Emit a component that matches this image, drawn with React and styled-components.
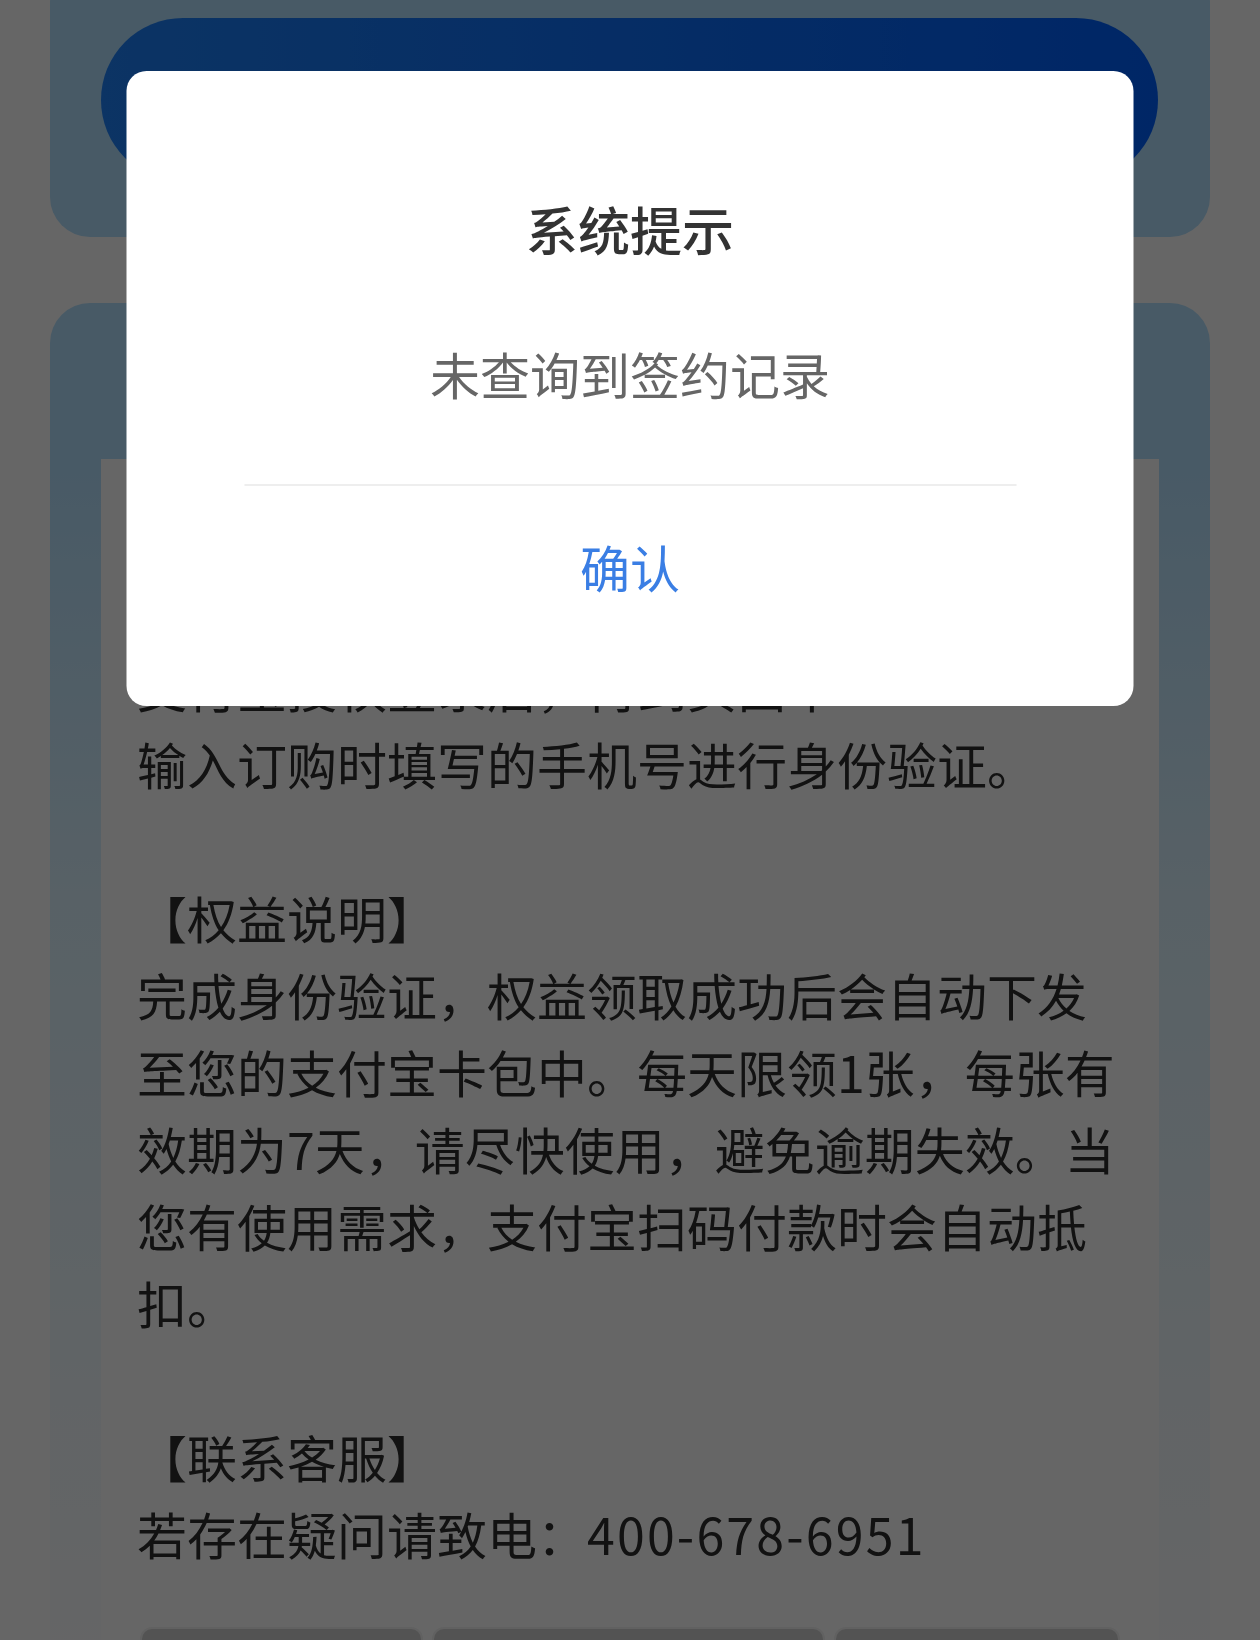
import React from "react";
import styled, { createGlobalStyle } from "styled-components";

const GlobalStyle = createGlobalStyle`
  html, body {
    margin: 0;
    padding: 0;
    background: #fff;
  }
  body {
    font-family: "Noto Sans CJK SC", "Noto Sans", sans-serif;
  }
`;

const Page = styled.div`
  position: relative;
  width: 1260px;
  height: 1640px;
  overflow: hidden;
  background: #fff;
`;

// page is scrolled a little, so the top card starts above the window
const TopCard = styled.div`
  margin: -37px 50px 0;
  padding: 55px 52px 55px 51px;
  background: #b4e1ff;
  border-radius: 40px;
`;

const ClaimButton = styled.div`
  width: 100%;
  height: 164px;
  border-radius: 82px;
  background: linear-gradient(90deg, #1e82fa 0%, #0060ff 100%);
`;

const RulesCard = styled.div`
  margin: 66px 50px 0;
  padding: 0 51px;
  border-radius: 40px;
  background: linear-gradient(
    180deg,
    #b4e1ff 0px,
    #b4e1ff 160px,
    #dcf3ff 600px,
    #f3fbff 1100px,
    #fcfdff 1340px
  );
`;

const RulesHeader = styled.div`
  height: 156px;
`;

const RulesBody = styled.div`
  background: #fff;
  padding: 35px 36px 0;
  color: #2e2e2e;
  font-size: 50px;
  line-height: 77px;
`;

const Section = styled.div`
  & + & {
    margin-top: 77px;
  }
`;

const Line = styled.p`
  margin: 0;
`;

const Phone = styled.span`
  letter-spacing: 2.2px;
`;

const Tabs = styled.div`
  display: grid;
  grid-template-columns: 283fr 393fr 286fr;
  gap: 9px;
  margin-top: 55px;
  padding: 0 3px;
`;

const Tab = styled.div`
  height: 80px;
  border: 2px solid #f2f2f2;
  border-radius: 12px;
  background: #d0d0d0;
`;

const Mask = styled.div`
  position: fixed;
  inset: 0;
  background: rgba(0, 0, 0, 0.6);
`;

const Dialog = styled.div`
  position: fixed;
  top: 71px;
  left: 50%;
  transform: translateX(-50%);
  width: 1007px;
  height: 635px;
  background: #fff;
  border-radius: 20px;
  display: flex;
  flex-direction: column;
  align-items: center;
`;

const DialogTitle = styled.div`
  margin-top: 122px;
  font-size: 52px;
  line-height: 72px;
  font-weight: 500;
  color: #333;
`;

const DialogText = styled.div`
  margin-top: 72px;
  font-size: 50px;
  line-height: 72px;
  color: #666;
`;

const Divider = styled.div`
  margin-top: 75px;
  width: 772px;
  height: 2px;
  background: #eeeeee;
`;

const ConfirmButton = styled.button`
  margin-top: 44px;
  padding: 0;
  border: 0;
  background: none;
  font-family: inherit;
  font-size: 50px;
  line-height: 72px;
  color: #3a7ee4;
`;

export default function App() {
  return (
    <>
      <GlobalStyle />
      <Page>
        <TopCard>
          <ClaimButton />
        </TopCard>

        <RulesCard>
          <RulesHeader />
          <RulesBody>
            <Section>
              <Line>【领取方式】</Line>
              <Line>点击上方按钮进入领取页面，根据提示完成支付宝授权登录后，再到页面中</Line>
              <Line>输入订购时填写的手机号进行身份验证。</Line>
            </Section>
            <Section>
              <Line>【权益说明】</Line>
              <Line>
                完成身份验证，权益领取成功后会自动下发至您的支付宝卡包中。每天限领1张，每张有效期为7天，请尽快使用，避免逾期失效。当您有使用需求，支付宝扫码付款时会自动抵扣。
              </Line>
            </Section>
            <Section>
              <Line>【联系客服】</Line>
              <Line>
                若存在疑问请致电：<Phone>400-678-6951</Phone>
              </Line>
            </Section>
            <Tabs>
              <Tab />
              <Tab />
              <Tab />
            </Tabs>
          </RulesBody>
        </RulesCard>

        <Mask />
        <Dialog>
          <DialogTitle>系统提示</DialogTitle>
          <DialogText>未查询到签约记录</DialogText>
          <Divider />
          <ConfirmButton>确认</ConfirmButton>
        </Dialog>
      </Page>
    </>
  );
}
